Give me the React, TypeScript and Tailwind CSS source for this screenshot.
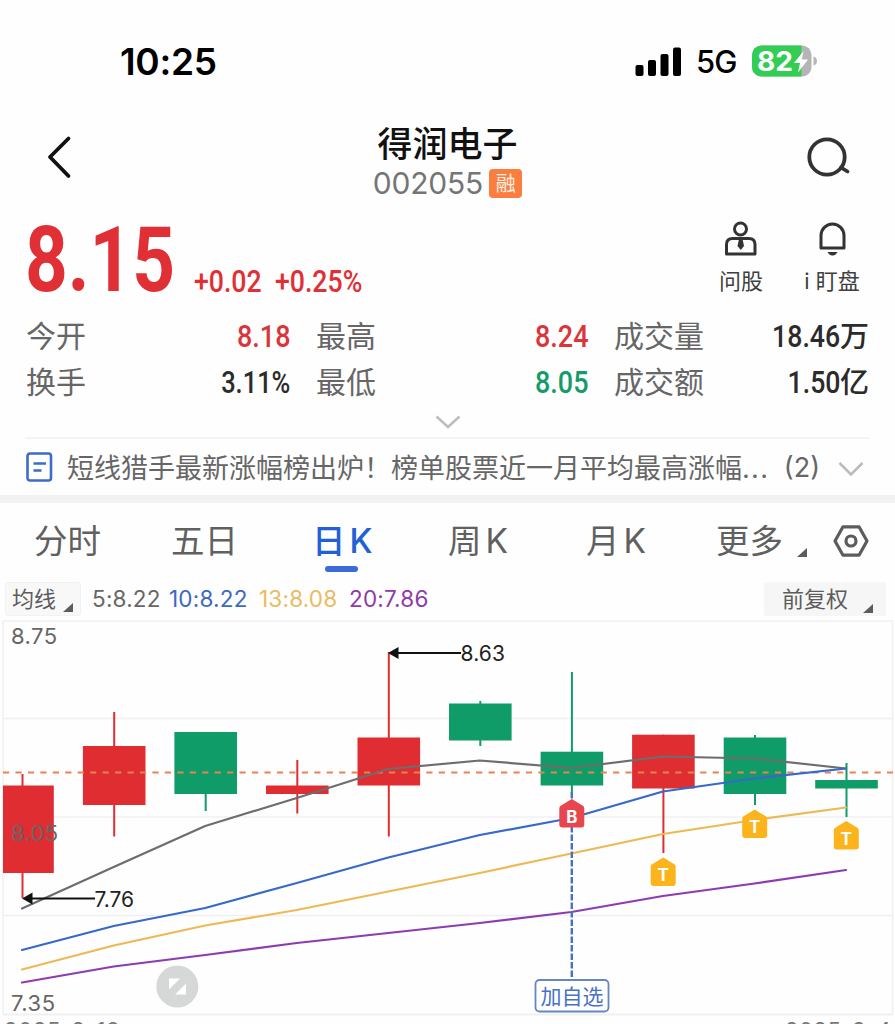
import React, { useState } from "react";

const CJK = "font-['Inter','Noto_Sans_CJK_SC',sans-serif]";

const UP = "#df2d32";
const DOWN = "#109c68";

type Candle = { x: number; high: number; top: number; bottom: number; low: number; color: string };

const candles: Candle[] = [
  { x: 22.5, high: 774, top: 785.5, bottom: 873, low: 898, color: UP },
  { x: 114.2, high: 712, top: 746, bottom: 805, low: 836.5, color: UP },
  { x: 205.7, high: 732, top: 732, bottom: 794, low: 811, color: DOWN },
  { x: 297.3, high: 760, top: 785.5, bottom: 794, low: 813.5, color: UP },
  { x: 388.8, high: 652, top: 737.5, bottom: 785.5, low: 836.5, color: UP },
  { x: 480.3, high: 701, top: 703.5, bottom: 740.5, low: 746, color: DOWN },
  { x: 571.9, high: 672, top: 751.7, bottom: 785.5, low: 794, color: DOWN },
  { x: 663.4, high: 734.7, top: 734.7, bottom: 788.5, low: 853, color: UP },
  { x: 755, high: 735, top: 737.5, bottom: 794, low: 805, color: DOWN },
  { x: 846.5, high: 763, top: 780, bottom: 788.5, low: 817, color: DOWN },
];

const averages = [
  { color: "#6d6d6d", ys: [908.5, 867, 826, 798, 769, 760.5, 768, 756.5, 758.5, 768.5] },
  { color: "#3669c9", ys: [950, 926, 908, 883, 857.5, 835, 818, 791.5, 778.5, 768.5] },
  { color: "#ecb955", ys: [969.5, 945.5, 925.5, 910, 891.5, 873, 853.5, 834, 820, 807.5] },
  { color: "#8f3bb0", ys: [982.5, 966.5, 955, 943, 933, 923, 912, 896, 883.5, 870] },
];

const marks = [
  { x: 571.8, y: 799, label: "B", color: "#e8464f" },
  { x: 663.2, y: 857.5, label: "T", color: "#fbb41c" },
  { x: 754.7, y: 809.5, label: "T", color: "#fbb41c" },
  { x: 846.3, y: 821, label: "T", color: "#fbb41c" },
];

const stats = [
  { label: "今开", value: "8.18", unit: "", color: "text-[#d9353b]", stretch: "scale-x-[0.87]" },
  { label: "最高", value: "8.24", unit: "", color: "text-[#d9353b]", stretch: "scale-x-[0.87]" },
  { label: "成交量", value: "18.46", unit: "万", color: "text-[#2b2b2b]", stretch: "scale-x-[0.86]" },
  { label: "换手", value: "3.11%", unit: "", color: "text-[#2b2b2b]", stretch: "scale-x-[0.82]" },
  { label: "最低", value: "8.05", unit: "", color: "text-[#159a69]", stretch: "scale-x-[0.87]" },
  { label: "成交额", value: "1.50", unit: "亿", color: "text-[#2b2b2b]", stretch: "scale-x-[0.86]" },
];

const tabs = [
  { key: "分时", cn: "分时", k: "", width: "w-[137px]" },
  { key: "五日", cn: "五日", k: "", width: "w-[141px]" },
  { key: "日K", cn: "日", k: "K", width: "w-[136px]" },
  { key: "周K", cn: "周", k: "K", width: "w-[138px]" },
  { key: "月K", cn: "月", k: "K", width: "w-[130px]" },
  { key: "更多", cn: "更多", k: "", width: "w-[80px]" },
];

function Corner({ className = "" }: { className?: string }) {
  return (
    <svg width="10" height="9" viewBox="0 0 10 9" className={className}>
      <path d="M10 0V9H0Z" fill="#5c5c5c" />
    </svg>
  );
}

function StatusBar() {
  return (
    <div className="flex h-[100px] items-start justify-between pl-[120px] pr-[77px] pt-[43px]">
      <div className="font-[Inter,sans-serif] text-[37px] font-semibold leading-[37px] tracking-[-0.3px] text-black">10:25</div>
      <div className="flex items-center">
        <svg width="46" height="29" viewBox="0 0 46 29" className="mb-px">
          <rect x="0.5" y="18" width="8" height="11" rx="2" />
          <rect x="13" y="13" width="8" height="16" rx="2" />
          <rect x="25.5" y="7" width="8" height="22" rx="2" />
          <rect x="38" y="0.5" width="8" height="28.5" rx="2" />
        </svg>
        <span className="ml-[15px] w-[41px] font-[Inter,sans-serif] text-[31px] font-medium leading-[37px] tracking-[-0.9px] text-black">5G</span>
        <svg width="66" height="32" viewBox="0 0 66 32" className="mb-[2px] ml-[15px]">
          <defs>
            <clipPath id="battery">
              <rect x="0" y="0.5" width="59.5" height="31" rx="9.5" />
            </clipPath>
          </defs>
          <g clipPath="url(#battery)">
            <rect width="60" height="32" fill="#b5b5b5" />
            <rect width="49.5" height="32" fill="#32cd55" />
          </g>
          <path d="M61.5 11.5Q65 12.5 65 16T61.5 20.5Z" fill="#b5b5b5" />
          <text x="5" y="26" textLength="36" lengthAdjust="spacingAndGlyphs" fill="#fff" className="font-[Inter,sans-serif] text-[27px] font-bold">82</text>
          <path d="M51.5 6L42 18H48L46 27.5L56 14.5H49.8Z" fill="#fff" />
        </svg>
      </div>
    </div>
  );
}

function Header() {
  return (
    <div className="flex h-[110px] items-start justify-between pl-[46px] pr-[42px]">
      <svg width="26" height="44" viewBox="0 0 26 44" className="mt-[35px]" fill="none" stroke="#111" strokeWidth="3.8" strokeLinecap="round" strokeLinejoin="round">
        <path d="M22.5 3.5L4 22L22.5 41" />
      </svg>
      <div className="ml-[16px] flex flex-col items-center pt-[26px]">
        <h1 className={`${CJK} text-[35px] font-medium leading-[36px] text-[#111]`}>得润电子</h1>
        <div className="mt-[4px] flex items-center">
          <span className="font-[Inter,sans-serif] text-[30px] font-normal leading-[34px] tracking-[-0.2px] text-[#757575]">002055</span>
          <span className={`${CJK} ml-[6px] flex h-[29px] w-[33px] items-center justify-center rounded-[4px] bg-[#f97e3f] text-[20px] leading-none text-[#fff3e6]`}>
            <span className="pt-[2px]">融</span>
          </span>
        </div>
      </div>
      <svg width="46" height="44" viewBox="0 0 46 44" className="mt-[35px]" fill="none" stroke="#333" strokeWidth="3.8" strokeLinecap="round">
        <circle cx="20" cy="22" r="17.7" />
        <path d="M34 32.5L40.5 36.5" />
      </svg>
    </div>
  );
}

function PriceRow() {
  return (
    <div className="flex h-[104px] justify-between pl-[25px] pr-[34px]">
      <div className="flex items-end font-[Roboto,sans-serif] text-[#e03035]">
        <div className="h-[107px] w-[169px]">
          <span className="inline-block origin-left scale-x-[0.82] text-[91px] font-bold leading-[107px]">8.15</span>
        </div>
        <div className="mb-[9px] h-[46px] w-[81px]">
          <span className="inline-block origin-left scale-x-[0.86] text-[31px] font-medium leading-[46px]">+0.02</span>
        </div>
        <div className="mb-[9px] h-[46px]">
          <span className="inline-block origin-left scale-x-[0.86] text-[31px] font-medium leading-[46px]">+0.25%</span>
        </div>
      </div>
      <div className="flex pt-[11px]">
        <button className="flex w-[46px] flex-col items-center">
          <svg width="34" height="36" viewBox="0 0 34 36" fill="none" stroke="#333" strokeWidth="3" strokeLinejoin="round">
            <circle cx="16.5" cy="8" r="6" />
            <path d="M2.5 33V23.5Q2.5 17.5 8.5 17.5H25Q31 17.5 31 23.5V33Z" />
            <path d="M15 18H18.5L20 25L16.8 29L13.5 25Z" fill="#333" stroke="none" />
          </svg>
          <span className={`${CJK} mt-[10px] whitespace-nowrap text-[22px] leading-[28px] text-[#404040]`}>问股</span>
        </button>
        <button className="ml-[39px] flex w-[58px] flex-col items-center">
          <svg width="30" height="36" viewBox="0 0 30 36" fill="none" stroke="#333" strokeWidth="3">
            <path d="M4 27V14.5A11.5 11.5 0 0 1 27 14.5V27Z" strokeLinejoin="round" />
            <path d="M10.5 31H20.5Q18.5 34.500 15.500 34.500T10.500 31Z" fill="#333" stroke="none" />
          </svg>
          <span className={`${CJK} mt-[10px] whitespace-nowrap text-[22px] leading-[28px] text-[#404040]`}>i 盯盘</span>
        </button>
      </div>
    </div>
  );
}

function Stats() {
  return (
    <div className="grid grid-cols-[264px_272px_255px] gap-x-[26px] pl-[26px]">
      {stats.map((s) => (
        <div key={s.label} className="flex h-[46px] items-center justify-between">
          <span className={`${CJK} pb-[2px] text-[30px] leading-[44px] text-[#666]`}>{s.label}</span>
          <span className={`flex items-center ${s.color}`}>
            <span className={`origin-right font-[Roboto,sans-serif] text-[31px] font-medium leading-[46px] ${s.stretch}`}>{s.value}</span>
            {s.unit && <span className={`${CJK} text-[29px] font-medium leading-[46px]`}>{s.unit}</span>}
          </span>
        </div>
      ))}
    </div>
  );
}

function NewsRow() {
  return (
    <div className="mx-[25px] flex h-[58px] items-center border-t-2 border-[#f4f4f4]">
      <svg width="27" height="30" viewBox="0 0 27 30" className="ml-px" fill="none" stroke="#3c6cc8">
        <rect x="1.5" y="1.5" width="23.500" height="27" rx="2.500" strokeWidth="2.600" />
        <path d="M7.500 11.500H20M7.500 18.500H15.500" strokeWidth="2.400" />
      </svg>
      <span className={`${CJK} ml-[14px] whitespace-nowrap pt-[4px] text-[27px] leading-[40px] text-[#666]`}>
        短线猎手最新涨幅榜出炉！榜单股票近一月平均最高涨幅<span className="tracking-[1.300px]">...</span>
      </span>
      <span className="ml-auto pt-[2px] font-[Inter,sans-serif] text-[27px] leading-[40px] text-[#666]">(2)</span>
      <svg width="26" height="16" viewBox="0 0 26 16" className="ml-[18px] mr-[6px] mt-[3px]" fill="none" stroke="#bbb" strokeWidth="2.500">
        <path d="M1.500 2L13 13.500L24.500 2" />
      </svg>
    </div>
  );
}

function PeriodTabs() {
  const [active, setActive] = useState("日K");
  return (
    <div className="flex h-[78px] pl-[34px]">
      {tabs.map((t) => (
        <button
          key={t.key}
          onClick={() => setActive(t.key)}
          className={`${CJK} flex shrink-0 flex-col items-start text-[33.500px] leading-[50px] ${t.width} ${
            active === t.key ? "font-medium text-[#2160d5]" : "text-[#606060]"
          }`}
        >
          <span className="flex items-center whitespace-nowrap pt-[13px]">
            {t.cn}
            {t.k && <span className="ml-[4px]">{t.k}</span>}
          </span>
          {active === t.key && <span className="ml-[13px] h-[6px] w-[33px] rounded-full bg-[#3b6bd6]" />}
        </button>
      ))}
      <Corner className="ml-px mt-[45px]" />
      <svg width="36" height="32" viewBox="0 0 36 32" className="ml-[26px] mt-[22px]" fill="none" stroke="#5c5c5c" strokeWidth="3.200">
        <path d="M10 1.800H26L34 16L26 30.200H10L2 16Z" strokeLinejoin="round" />
        <circle cx="18" cy="16" r="5" />
      </svg>
    </div>
  );
}

function AverageRow() {
  return (
    <div className="flex h-[39px] items-start justify-between pl-[5px] pr-[9px] pt-px">
      <div className="flex items-center">
        <button className="flex h-[34px] w-[76px] items-center justify-between rounded-[3px] border border-[#f2f2f2] bg-[#f8f8f8] pl-[6px] pr-[7px]">
          <span className={`${CJK} text-[22px] leading-[32px] text-[#5c5c5c]`}>均线</span>
          <Corner className="mt-[16px]" />
        </button>
        <div className="ml-[11px] flex font-[Inter,sans-serif] text-[22.500px] leading-[34px] tracking-[0.200px]">
          <span className="w-[77px] text-[#666]">5:8.22</span>
          <span className="w-[90px] text-[#3d69bd]">10:8.22</span>
          <span className="w-[90px] text-[#e9bb62]">13:8.08</span>
          <span className="text-[#8f3aa8]">20:7.86</span>
        </div>
      </div>
      <button className="flex h-[34px] w-[122px] items-center justify-between rounded-[3px] bg-[#f6f6f6] pl-[18px] pr-[13px]">
        <span className={`${CJK} text-[22px] leading-[32px] text-[#5c5c5c]`}>前复权</span>
        <Corner className="mt-[18px]" />
      </button>
    </div>
  );
}

function KLineChart() {
  return (
    <svg width="895" height="404" viewBox="0 620 895 404" className="block shrink-0 font-[Inter,sans-serif]">
      {/* grid */}
      <g stroke="#f0f0f0" strokeWidth="1.500">
        {[621, 718.5, 817, 915.5].map((y) => (
          <path key={y} d={`M3 ${y}H892.5`} />
        ))}
        <path d="M3 1014.500H892.500" strokeWidth="2" />
        <path d="M3 621V1014.500M892.500 621V1014.500" />
      </g>

      {candles.map((c) => {
        const left = Math.max(c.x - 31.3, 3);
        return (
          <g key={c.x} fill={c.color}>
            <rect x={c.x - 1} y={c.high} width="2" height={c.low - c.high} />
            <rect x={left} y={c.top} width={c.x + 31.3 - left} height={c.bottom - c.top} />
          </g>
        );
      })}

      <path d="M3 772.500H893" stroke="#e88350" strokeWidth="2" strokeDasharray="6.200 6.250" />

      {averages.map((a) => (
        <polyline
          key={a.color}
          points={a.ys.map((y, i) => `${candles[i].x - 0.5},${y}`).join(" ")}
          fill="none"
          stroke={a.color}
          strokeWidth="2.200"
          strokeLinecap="round"
          strokeLinejoin="round"
        />
      ))}

      <path d="M571.800 792V980" stroke="#4672c4" strokeWidth="2.400" strokeDasharray="6.500 2" />

      {marks.map((m) => (
        <g key={m.x}>
          <path
            transform={`translate(${m.x} ${m.y})`}
            d="M0 0L11.500 7Q12.500 8 12.500 9.500V25.500Q12.500 28.500 9.500 28.500H-9.500Q-12.500 28.500 -12.500 25.500V9.500Q-12.500 8 -11.500 7Z"
            fill={m.color}
          />
          <text x={m.x} y={m.y + 23.5} textAnchor="middle" fill="#fff" className="text-[17px] font-bold">
            {m.label}
          </text>
        </g>
      ))}

      {/* high / low callouts */}
      <g stroke="#111" strokeWidth="1.800">
        <path d="M395 653H461" />
        <path d="M29 898.500H95" />
      </g>
      <g fill="#111">
        <path d="M388 653L398.500 647V659Z" />
        <path d="M22 898.500L32.500 892.500V904.500Z" />
      </g>
      <text x="460.500" y="661" textLength="44.500" fill="#222" className="text-[21px]">8.63</text>
      <text x="94.500" y="906.500" textLength="39.500" fill="#222" className="text-[21px]">7.76</text>

      <g fill="#666" className="text-[22px]">
        <text x="11" y="643.500" textLength="46">8.75</text>
        <text x="11" y="841" textLength="47">8.05</text>
        <text x="11" y="1011" textLength="44">7.35</text>
      </g>

      <rect x="535.500" y="980" width="73" height="31.500" rx="4" fill="#fff" stroke="#6488c0" strokeWidth="1.800" />
      <text x="572" y="1004" textAnchor="middle" fill="#4872c4" className={`${CJK} text-[21px]`}>加自选</text>

      <circle cx="177.300" cy="986.500" r="21" fill="#d6d8d8" />
      <path d="M169 978.500H180L169 989.500ZM186 983.500V994.500H175Z" fill="#fff" />

      <g fill="#777" className="text-[22px]">
        <text x="4" y="1038" textLength="116">2025-2-19</text>
        <text x="785" y="1038" textLength="106">2025-3-4</text>
      </g>
    </svg>
  );
}

export default function App() {
  return (
    <main className="flex h-[1024px] w-[895px] flex-col overflow-hidden bg-[#fefefe]">
      <StatusBar />
      <Header />
      <PriceRow />
      <Stats />
      <div className="flex h-[31px] items-center justify-center">
        <svg width="26" height="16" viewBox="0 0 26 16" fill="none" stroke="#bdbdbd" strokeWidth="2.500">
          <path d="M1.500 2.500L13 13L24.500 2.500" />
        </svg>
      </div>
      <NewsRow />
      <div className="h-[8px] shrink-0 bg-[#f2f2f2]" />
      <PeriodTabs />
      <AverageRow />
      <KLineChart />
    </main>
  );
}
